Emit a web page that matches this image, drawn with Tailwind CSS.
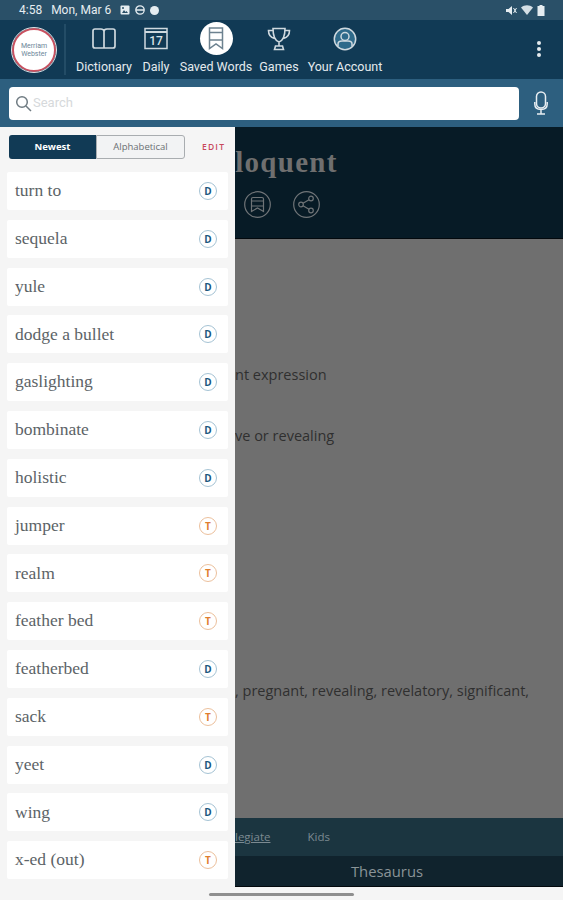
<!DOCTYPE html>
<html>
<head>
<meta charset="utf-8">
<script src="https://cdn.jsdelivr.net/npm/@tailwindcss/browser@4"></script>
</head>
<body class="m-0">
<div class="relative w-[563px] h-[900px] flex flex-col overflow-hidden bg-[#f5f5f5] font-['Roboto',sans-serif]">
  <!-- status bar -->
  <div class="h-[20px] shrink-0 bg-[#2a5068] flex items-center pl-[19px] pr-[18px] text-[12px] text-[#e6edf1]">
    <span>4:58</span>
    <span class="ml-[9px]">Mon, Mar 6</span>
    <div class="ml-[9px] flex items-center gap-[5px]">
      <svg width="10" height="10" viewBox="0 0 10 10"><rect x="0.5" y="0.5" width="9" height="9" rx="1" fill="#e6edf1"/><path d="M2 8l2-3 1.500 2 1-1 1.500 2z" fill="#2a5068"/><circle cx="3" cy="3" r="1" fill="#2a5068"/></svg>
      <svg width="10" height="10" viewBox="0 0 10 10"><circle cx="5" cy="5" r="4.200" fill="none" stroke="#e6edf1" stroke-width="1.300"/><path d="M1 5h8" stroke="#e6edf1" stroke-width="1.500"/></svg>
      <svg width="9" height="9" viewBox="0 0 9 9"><circle cx="4.500" cy="4.500" r="4.500" fill="#e6edf1"/></svg>
    </div>
    <div class="ml-auto flex items-center gap-[4px]">
      <svg width="11" height="11" viewBox="0 0 11 11"><path d="M0 4h2.500L6 1v9L2.500 7H0z" fill="#e6edf1"/><path d="M7.500 3l3 5M10.500 3l-3 5" stroke="#e6edf1" stroke-width="1"/></svg>
      <svg width="12" height="10" viewBox="0 0 12 10"><path d="M0 2.500C3.500-.5 8.500-.5 12 2.500L6 10z" fill="#d5dfe5"/></svg>
      <svg width="8" height="11" viewBox="0 0 8 11"><path d="M2.500 0h3v1H7.500v10h-7V1h2z" fill="#e6edf1"/></svg>
    </div>
  </div>
  <!-- nav -->
  <div class="h-[59px] shrink-0 bg-[#113a55] flex items-stretch text-[12.500px] leading-[13px] text-[#e4eaee]">
    <div class="w-[66px] shrink-0 flex items-center justify-center border-r-2 border-[#234c66] my-[4px] pl-[5px] pr-[1px]">
      <div class="w-[44px] h-[44px] shrink-0 rounded-full bg-white border-[2px] border-[#c9505f] outline outline-1 outline-[#dfe5e8] flex items-center justify-center text-center text-[7px] leading-[8px] text-[#6c8698] font-['Roboto',sans-serif]">Merriam<br>Webster</div>
    </div>
    <div class="flex flex-col items-center w-[60px] ml-[8px] pt-[8px] pb-[6px]">
      <svg width="24" height="21" viewBox="0 0 24 21" fill="none" stroke="#cfd9df" stroke-width="1.700"><path d="M12 3.500C12 2 10.500 1 9 1H3C1.800 1 1 1.800 1 3v15c0 1.200.8 2 2 2h18c1.200 0 2-.8 2-2V3c0-1.200-.8-2-2-2h-6c-1.500 0-3 1-3 2.500zM12 3.500V20"/></svg>
      <span class="mt-auto whitespace-nowrap">Dictionary</span>
    </div>
    <div class="flex flex-col items-center w-[40px] ml-[2px] pt-[7px] pb-[6px]">
      <svg width="24" height="23" viewBox="0 0 24 23" fill="none"><rect x="1" y="1.500" width="22" height="20" fill="#113a55" stroke="#cfd9df" stroke-width="1.500"/><path d="M1 5h22" stroke="#cfd9df" stroke-width="2"/><text x="12" y="18" text-anchor="middle" font-size="12" font-family="Roboto" font-weight="500" fill="#d8e1e6">17</text></svg>
      <span class="mt-auto">Daily</span>
    </div>
    <div class="flex flex-col items-center w-[80px] pt-[2px] pb-[6px]">
      <div class="w-[33px] h-[33px] rounded-full bg-white flex items-center justify-center">
        <svg width="16" height="23" viewBox="0 0 16 23" fill="none" stroke="#6d8290" stroke-width="1.500"><path d="M1.500 1h13v20.500L8 17l-6.500 4.500zM1.500 5.500h13M1.500 13h13"/></svg>
      </div>
      <span class="mt-auto whitespace-nowrap">Saved Words</span>
    </div>
    <div class="flex flex-col items-center w-[46px] pt-[7px] pb-[6px]">
      <svg width="24" height="24" viewBox="0 0 24 24" fill="none" stroke="#cfd9df" stroke-width="1.600"><path d="M6 1.500h12c0 8-1.500 12-6 13.500C7.500 13.500 6 9.500 6 1.500zM6 3.500H1.500c0 4.500 2 7 6 8M18 3.500h4.500c0 4.500-2 7-6 8M12 15v4M7.500 22.500h9l-1-3.500h-7z"/></svg>
      <span class="mt-auto">Games</span>
    </div>
    <div class="flex flex-col items-center w-[86px] pt-[7px] pb-[6px]">
      <svg width="24" height="24" viewBox="0 0 24 24" fill="none" stroke="#cfd9df" stroke-width="1.500"><circle cx="12" cy="12" r="10.700" fill="#2f6a8a"/><circle cx="12" cy="9.500" r="4"/><path d="M5 19.500v-2.500c0-2 2-3 4-3h6c2 0 4 1 4 3v2.500"/></svg>
      <span class="mt-auto whitespace-nowrap">Your Account</span>
    </div>
    <div class="ml-auto mr-[22px] flex flex-col items-center justify-center gap-[2px] pb-[1px]">
      <span class="w-[4px] h-[4px] rounded-full bg-[#e4eaee]"></span>
      <span class="w-[4px] h-[4px] rounded-full bg-[#e4eaee]"></span>
      <span class="w-[4px] h-[4px] rounded-full bg-[#e4eaee]"></span>
    </div>
  </div>
  <!-- search -->
  <div class="h-[48px] shrink-0 bg-[#2d5f7f] flex items-center pl-[9px] pr-[15px]">
    <div class="w-[510px] h-[33px] bg-white rounded-[4px] flex items-center pl-[6px] gap-[1px]">
      <svg width="17" height="17" viewBox="0 0 17 17" fill="none" stroke="#6f7b82" stroke-width="1.500"><circle cx="7" cy="7" r="5.300"/><path d="M11 11l5 5"/></svg>
      <span class="text-[13px] text-[#d6d9db]">Search</span>
    </div>
    <div class="ml-auto">
      <svg width="14" height="24" viewBox="0 0 14 24" fill="none" stroke="#e8eef2" stroke-width="1.500"><rect x="2.500" y="1" width="9" height="16" rx="4.500" fill="#2d5f7f"/><path d="M.8 11v2c0 3.500 2.500 5.500 6.200 5.500s6.200-2 6.200-5.500v-2M7 18.500v4M3 23h8"/></svg>
    </div>
  </div>
  <!-- body -->
  <div class="flex-1 flex min-h-0">
    <!-- drawer -->
    <div class="w-[235px] shrink-0 bg-[#f5f5f5] pt-[8px] px-[7px]">
      <div class="flex items-center h-[24px] pl-[2px]">
        <div class="w-[87px] h-[24px] bg-[#113a55] rounded-l-[3px] text-white text-[9.500px] font-bold flex items-center justify-center font-['Open_Sans',sans-serif]">Newest</div>
        <div class="w-[89px] h-[24px] bg-[#f2f3f4] border border-[#a9adb0] rounded-r-[3px] text-[#6a6f73] text-[9.500px] flex items-center justify-center font-['Open_Sans',sans-serif]">Alphabetical</div>
        <div class="ml-[17px] text-[#c8485c] text-[8.500px] font-semibold tracking-[1.200px] font-['Open_Sans',sans-serif]">EDIT</div>
      </div>
      <div class="mt-[13px] flex flex-col gap-[9.800px] text-[17.500px] leading-none text-[#5c6367] font-['Liberation_Serif',serif]">
        <div class="h-[38px] bg-white rounded-[2px] flex items-center justify-between pl-[8px] pr-[11px]"><span>turn to</span><span class="w-[18px] h-[18px] rounded-full border border-[#a5c3d4] flex items-center justify-center text-[10px] font-bold text-[#1d587f] font-['Open_Sans',sans-serif]">D</span></div>
        <div class="h-[38px] bg-white rounded-[2px] flex items-center justify-between pl-[8px] pr-[11px]"><span>sequela</span><span class="w-[18px] h-[18px] rounded-full border border-[#a5c3d4] flex items-center justify-center text-[10px] font-bold text-[#1d587f] font-['Open_Sans',sans-serif]">D</span></div>
        <div class="h-[38px] bg-white rounded-[2px] flex items-center justify-between pl-[8px] pr-[11px]"><span>yule</span><span class="w-[18px] h-[18px] rounded-full border border-[#a5c3d4] flex items-center justify-center text-[10px] font-bold text-[#1d587f] font-['Open_Sans',sans-serif]">D</span></div>
        <div class="h-[38px] bg-white rounded-[2px] flex items-center justify-between pl-[8px] pr-[11px]"><span>dodge a bullet</span><span class="w-[18px] h-[18px] rounded-full border border-[#a5c3d4] flex items-center justify-center text-[10px] font-bold text-[#1d587f] font-['Open_Sans',sans-serif]">D</span></div>
        <div class="h-[38px] bg-white rounded-[2px] flex items-center justify-between pl-[8px] pr-[11px]"><span>gaslighting</span><span class="w-[18px] h-[18px] rounded-full border border-[#a5c3d4] flex items-center justify-center text-[10px] font-bold text-[#1d587f] font-['Open_Sans',sans-serif]">D</span></div>
        <div class="h-[38px] bg-white rounded-[2px] flex items-center justify-between pl-[8px] pr-[11px]"><span>bombinate</span><span class="w-[18px] h-[18px] rounded-full border border-[#a5c3d4] flex items-center justify-center text-[10px] font-bold text-[#1d587f] font-['Open_Sans',sans-serif]">D</span></div>
        <div class="h-[38px] bg-white rounded-[2px] flex items-center justify-between pl-[8px] pr-[11px]"><span>holistic</span><span class="w-[18px] h-[18px] rounded-full border border-[#a5c3d4] flex items-center justify-center text-[10px] font-bold text-[#1d587f] font-['Open_Sans',sans-serif]">D</span></div>
        <div class="h-[38px] bg-white rounded-[2px] flex items-center justify-between pl-[8px] pr-[11px]"><span>jumper</span><span class="w-[18px] h-[18px] rounded-full border border-[#ecc09c] flex items-center justify-center text-[10px] font-bold text-[#df7d2f] font-['Open_Sans',sans-serif]">T</span></div>
        <div class="h-[38px] bg-white rounded-[2px] flex items-center justify-between pl-[8px] pr-[11px]"><span>realm</span><span class="w-[18px] h-[18px] rounded-full border border-[#ecc09c] flex items-center justify-center text-[10px] font-bold text-[#df7d2f] font-['Open_Sans',sans-serif]">T</span></div>
        <div class="h-[38px] bg-white rounded-[2px] flex items-center justify-between pl-[8px] pr-[11px]"><span>feather bed</span><span class="w-[18px] h-[18px] rounded-full border border-[#ecc09c] flex items-center justify-center text-[10px] font-bold text-[#df7d2f] font-['Open_Sans',sans-serif]">T</span></div>
        <div class="h-[38px] bg-white rounded-[2px] flex items-center justify-between pl-[8px] pr-[11px]"><span>featherbed</span><span class="w-[18px] h-[18px] rounded-full border border-[#a5c3d4] flex items-center justify-center text-[10px] font-bold text-[#1d587f] font-['Open_Sans',sans-serif]">D</span></div>
        <div class="h-[38px] bg-white rounded-[2px] flex items-center justify-between pl-[8px] pr-[11px]"><span>sack</span><span class="w-[18px] h-[18px] rounded-full border border-[#ecc09c] flex items-center justify-center text-[10px] font-bold text-[#df7d2f] font-['Open_Sans',sans-serif]">T</span></div>
        <div class="h-[38px] bg-white rounded-[2px] flex items-center justify-between pl-[8px] pr-[11px]"><span>yeet</span><span class="w-[18px] h-[18px] rounded-full border border-[#a5c3d4] flex items-center justify-center text-[10px] font-bold text-[#1d587f] font-['Open_Sans',sans-serif]">D</span></div>
        <div class="h-[38px] bg-white rounded-[2px] flex items-center justify-between pl-[8px] pr-[11px]"><span>wing</span><span class="w-[18px] h-[18px] rounded-full border border-[#a5c3d4] flex items-center justify-center text-[10px] font-bold text-[#1d587f] font-['Open_Sans',sans-serif]">D</span></div>
        <div class="h-[38px] bg-white rounded-[2px] flex items-center justify-between pl-[8px] pr-[11px]"><span>x-ed (out)</span><span class="w-[18px] h-[18px] rounded-full border border-[#ecc09c] flex items-center justify-center text-[10px] font-bold text-[#df7d2f] font-['Open_Sans',sans-serif]">T</span></div>
      </div>
    </div>
    <!-- dimmed page -->
    <div class="flex-1 min-w-0 flex flex-col overflow-hidden pb-[13px]">
      <div class="h-[112px] shrink-0 bg-[#071b26] border-b border-[#03090d] pt-[18px]">
        <div class="text-[29px] leading-[34px] font-bold tracking-[1.300px] text-[#6f6f6f] ml-[-14px] whitespace-nowrap font-['Liberation_Serif',serif]">eloquent</div>
        <div class="flex gap-[22px] ml-[9px] mt-[12px]">
          <svg width="27" height="27" viewBox="0 0 27 27" fill="none" stroke="#6f7477" stroke-width="1.200"><circle cx="13.500" cy="13.500" r="12.800"/><path d="M7.500 8c0-1 .7-1.500 1.500-1.500h9c.8 0 1.500.5 1.500 1.500v12.500l-6-3.500-6 3.500zM7.500 10h12M7.500 15h12"/></svg>
          <svg width="27" height="27" viewBox="0 0 27 27" fill="none" stroke="#6f7477" stroke-width="1.200"><circle cx="13.500" cy="13.500" r="12.800"/><circle cx="18" cy="7.500" r="2.300"/><circle cx="8" cy="13.500" r="2.300"/><circle cx="18" cy="19.500" r="2.300"/><path d="M10 12.300l6-3.600M10 14.700l6 3.600"/></svg>
        </div>
      </div>
      <div class="flex-1 min-h-0 bg-[#6f6f6f] text-[14.500px] leading-[19px] text-[#2f2f2f] font-['Open_Sans',sans-serif] whitespace-nowrap">
        <div class="mt-[126px]">nt expression</div>
        <div class="mt-[42px]">ve or revealing</div>
        <div class="mt-[236px]">, pregnant, revealing, revelatory, significant,</div>
      </div>
      <div class="h-[38px] shrink-0 bg-[#1b3540] flex items-center gap-[37px] text-[11.500px] text-[#7c8a91] font-['Open_Sans',sans-serif]">
        <span class="underline">legiate</span>
        <span>Kids</span>
      </div>
      <div class="h-[31px] shrink-0 bg-[#10232d] border-b border-[#03090d] flex items-center justify-center text-[14.800px] text-[#8a9498] font-['Open_Sans',sans-serif]">
        <span class="mr-[24px]">Thesaurus</span>
      </div>
    </div>
  </div>
  <!-- gesture bar -->
  <div class="absolute left-[209px] top-[893px] w-[145px] h-[3px] rounded-full bg-[#8f8f8f]"></div>
</div>
</body>
</html>
